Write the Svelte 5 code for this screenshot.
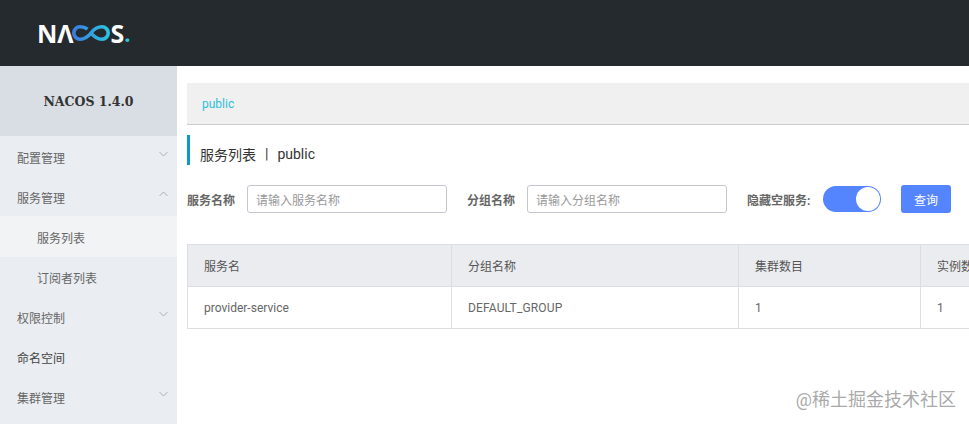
<script>
  const menu = [
    { label: '配置管理', arrow: 'down' },
    { label: '服务管理', arrow: 'up' },
    { label: '服务列表', sub: true, active: true },
    { label: '订阅者列表', sub: true },
    { label: '权限控制', arrow: 'down' },
    { label: '命名空间', dark: true },
    { label: '集群管理', arrow: 'down' }
  ];
</script>

<div class="page">
  <header class="top">
    <div class="logo">
      <span class="ltr">NΛ</span>
      <svg class="inf" width="40" height="16" viewBox="0 0 40 16" aria-hidden="true">
        <defs>
          <linearGradient id="g" x1="0" x2="1" y1="0" y2="0">
            <stop offset="0" stop-color="#3a7de0" />
            <stop offset="1" stop-color="#2cc4de" />
          </linearGradient>
        </defs>
        <path d="M16.5 4.2C14.5 2.6 12 1.8 9 1.8a6.2 6.2 0 0 0 0 12.4c5 0 8-2.3 11-6.2s6-6.2 11-6.2a6.2 6.2 0 0 1 0 12.4c-5 0-8-2.3-11-6.2" fill="none" stroke="url(#g)" stroke-width="3.6" />
      </svg>
      <span class="ltr">S</span><span class="dot">.</span>
    </div>
  </header>
  <div class="body">
    <aside class="side">
      <div class="ver">NACOS 1.4.0</div>
      <nav class="menu">
        {#each menu as m}
          <div class="item" class:sub={m.sub} class:active={m.active} class:dark={m.dark}>
            <span>{m.label}</span>
            {#if m.arrow}
              <svg class="arrow" width="9" height="6" viewBox="0 0 9 6" aria-hidden="true">
                <path d={m.arrow === 'up' ? 'M.5 5 4.5 1l4 4' : 'M.5 1l4 4 4-4'} fill="none" stroke="#a9aeb4" stroke-width="1" />
              </svg>
            {/if}
          </div>
        {/each}
      </nav>
    </aside>
    <main class="main">
      <div class="crumb">public</div>
      <h1 class="title"><span>服务列表</span><span class="sep">|</span><span>public</span></h1>
      <form class="filters">
        <label class="lab">服务名称</label>
        <div class="input">请输入服务名称</div>
        <label class="lab second">分组名称</label>
        <div class="input">请输入分组名称</div>
        <label class="lab third">隐藏空服务:</label>
        <div class="switch"><i></i></div>
        <button class="btn" type="button">查询</button>
      </form>
      <div class="table">
        <div class="row head">
          <div class="c c1">服务名</div>
          <div class="c c2">分组名称</div>
          <div class="c c3">集群数目</div>
          <div class="c c4"><span>实例数</span></div>
        </div>
        <div class="row">
          <div class="c c1">provider-service</div>
          <div class="c c2 wide">DEFAULT_GROUP</div>
          <div class="c c3">1</div>
          <div class="c c4">1</div>
        </div>
      </div>
    </main>
  </div>
  <div class="mark">@稀土掘金技术社区</div>
</div>

<style>
  :global(body) {
    margin: 0;
    background: #fff;
    overflow: hidden;
  }
  .page {
    width: 969px;
    height: 424px;
    overflow: hidden;
    position: relative;
    font-family: Roboto, "Noto Sans CJK SC", sans-serif;
    font-size: 12px;
    color: #666;
  }
  .top {
    height: 66px;
    background: #252a2f;
    display: flex;
    align-items: center;
    padding-left: 37px;
  }
  .logo {
    display: flex;
    align-items: center;
    height: 20px;
    font-family: "Open Sans", sans-serif;
    font-size: 25px;
    font-weight: 700;
    color: #fff;
    line-height: 20px;
  }
  .inf {
    width: 40px;
    height: 16px;
    margin: 0 0 0 -3px;
  }
  .dot {
    color: #2cc4de;
    font-size: 22px;
  }
  .body {
    display: flex;
    height: 358px;
  }
  .side {
    width: 177px;
    flex: none;
    background: #eaedf1;
  }
  .ver {
    height: 70px;
    background: #d9dee4;
    display: flex;
    align-items: center;
    justify-content: center;
    font-family: "DejaVu Serif", serif;
    font-weight: 700;
    font-size: 12.5px;
    color: #333;
  }
  .menu {
    padding-top: 1px;
  }
  .item {
    height: 40px;
    display: flex;
    align-items: center;
    justify-content: space-between;
    padding: 0 9px 0 17px;
    color: #666;
  }
  .item.dark {
    color: #444;
  }
  .sub {
    padding-left: 37px;
  }
  .active {
    background: #f2f3f5;
    box-shadow: 0 -1px 0 #f2f3f5;
  }
  .arrow {
    margin-top: -6px;
  }
  .main {
    flex: 1;
    min-width: 0;
    padding: 17px 0 0 10px;
  }
  .crumb {
    height: 41px;
    background: #f0f0f0;
    border-bottom: 1px solid #ccc;
    display: flex;
    align-items: center;
    padding-left: 15px;
    color: #2cc0d8;
  }
  .title {
    margin: 10px 0 0;
    height: 30px;
    border-left: 3px solid #0d9bc6;
    padding: 8px 0 0 10px;
    box-sizing: border-box;
    display: flex;
    align-items: center;
    font-size: 14px;
    font-weight: 400;
    color: #333;
  }
  .sep {
    margin: 0 9px 0 9px;
  }
  .filters {
    margin-top: 20px;
    display: flex;
    align-items: center;
    height: 28px;
  }
  .lab {
    font-weight: 700;
    width: 60px;
    color: #666;
  }
  .second {
    margin-left: 20px;
  }
  .third {
    margin-left: 20px;
    width: 76px;
  }
  .input {
    width: 182px;
    height: 26px;
    padding: 0 8px;
    border: 1px solid #c4c6cf;
    border-radius: 3px;
    display: flex;
    align-items: center;
    color: #999;
  }
  .switch {
    width: 58px;
    height: 26px;
    border-radius: 13px;
    background: #5584ff;
    position: relative;
  }
  .switch i {
    position: absolute;
    right: 1px;
    top: 1px;
    width: 24px;
    height: 24px;
    border-radius: 50%;
    background: #fff;
  }
  .btn {
    margin-left: 20px;
    width: 50px;
    height: 28px;
    border: 0;
    border-radius: 3px;
    background: #5584ff;
    color: #fff;
    font: inherit;
    padding: 0;
  }
  .table {
    margin-top: 31px;
    width: 800px;
    border: 1px solid #dcdee3;
    border-bottom: 0;
  }
  .row {
    display: flex;
    height: 41px;
    border-bottom: 1px solid #dcdee3;
    color: #666;
  }
  .head {
    background: #ebecf0;
    color: #555;
  }
  .c {
    display: flex;
    align-items: center;
    padding-left: 16px;
    box-sizing: border-box;
    border-right: 1px solid #dcdee3;
    white-space: nowrap;
  }
  .wide {
    letter-spacing: 0.15px;
  }
  .c1 { width: 264px; }
  .c2 { width: 287px; }
  .c3 { width: 182px; }
  .c4 { width: 67px; border-right: 0; }
  .mark {
    position: absolute;
    right: 13px;
    bottom: 13px;
    font-size: 18px;
    line-height: 22px;
    color: rgba(130, 130, 130, 0.7);
    white-space: nowrap;
  }
</style>
